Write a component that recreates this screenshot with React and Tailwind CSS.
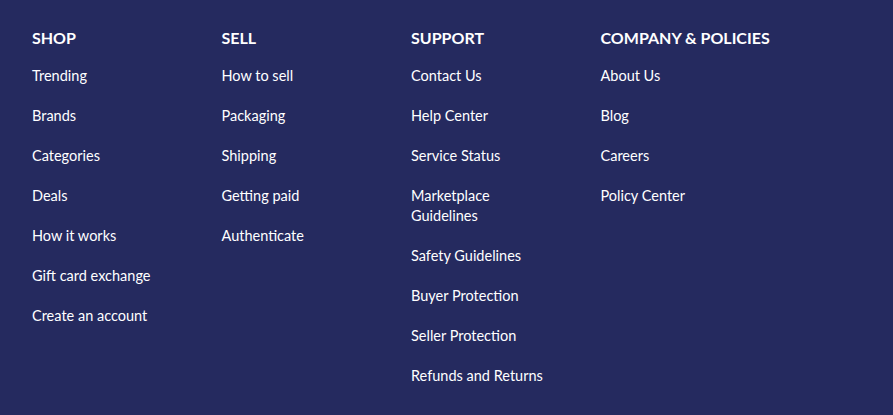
const columns = [
  {
    title: 'SHOP',
    links: ['Trending', 'Brands', 'Categories', 'Deals', 'How it works', 'Gift card exchange', 'Create an account'],
  },
  {
    title: 'SELL',
    links: ['How to sell', 'Packaging', 'Shipping', 'Getting paid', 'Authenticate'],
  },
  {
    title: 'SUPPORT',
    links: [
      'Contact Us',
      'Help Center',
      'Service Status',
      'Marketplace Guidelines',
      'Safety Guidelines',
      'Buyer Protection',
      'Seller Protection',
      'Refunds and Returns',
    ],
  },
  {
    title: 'COMPANY & POLICIES',
    links: ['About Us', 'Blog', 'Careers', 'Policy Center'],
  },
]

export default function App() {
  return (
    <footer
      className="min-h-[415px] w-full bg-[#252a5f] text-white pl-8 pt-[26px]"
      style={{ fontFamily: 'Lato, "Noto Sans", sans-serif' }}
    >
      <div className="flex">
        {columns.map((col) => (
          <div key={col.title} className="w-[189.5px] shrink-0">
            <h3 className="text-[16px] font-bold leading-6">{col.title}</h3>
            <ul className="mt-4 flex flex-col gap-5">
              {col.links.map((link) => (
                <li key={link} className="text-[14.5px] leading-5">
                  <a href="#" className="hover:underline">
                    {link === 'Marketplace Guidelines' ? (
                      <>
                        Marketplace
                        <br />
                        Guidelines
                      </>
                    ) : (
                      link
                    )}
                  </a>
                </li>
              ))}
            </ul>
          </div>
        ))}
      </div>
    </footer>
  )
}
